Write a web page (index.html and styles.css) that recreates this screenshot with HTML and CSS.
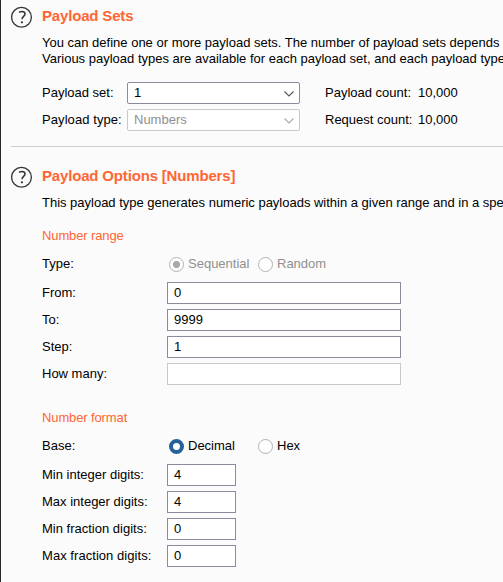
FILE: index.html
```html
<!DOCTYPE html>
<html lang="en">
<head>
<meta charset="utf-8">
<title>Payloads</title>
<link rel="stylesheet" href="styles.css">
</head>
<body>
<main class="panel">
  <section class="section sets">
    <svg class="help" viewBox="0 0 22 22"><circle cx="10.5" cy="11.2" r="9.9"/><path d="M8 6.3Q9.3 5.5 11 5.5C13 5.5 14 6.5 14 8C14 10.3 11 10.6 11 13.2"/><circle class="dot" cx="10.9" cy="16.3" r="1.1"/></svg>
    <div class="content">
      <h2>Payload Sets</h2>
      <p>You can define one or more payload sets. The number of payload sets depends<br>Various payload types are available for each payload set, and each payload type</p>
      <div class="rows set-rows">
        <div class="row"><label>Payload set:</label><div class="select">1<svg class="chevron" viewBox="0 0 10 6"><path d="M.5 .5L5 5L9.5 .5"/></svg></div><span class="name">Payload count:</span><span>10,000</span></div>
        <div class="row"><label class="wide">Payload type:</label><div class="select disabled">Numbers<svg class="chevron" viewBox="0 0 10 6"><path d="M.5 .5L5 5L9.5 .5"/></svg></div><span class="name">Request count:</span><span>10,000</span></div>
      </div>
    </div>
  </section>
  <hr>
  <section class="section options">
    <svg class="help" viewBox="0 0 22 22"><circle cx="10.5" cy="11.2" r="9.9"/><path d="M8 6.3Q9.3 5.5 11 5.5C13 5.5 14 6.5 14 8C14 10.3 11 10.6 11 13.2"/><circle class="dot" cx="10.9" cy="16.3" r="1.1"/></svg>
    <div class="content">
      <h2>Payload Options [Numbers]</h2>
      <p class="about">This payload type generates numeric payloads within a given range and in a spe</p>
      <h3>Number range</h3>
      <div class="rows">
        <div class="row radios disabled"><label>Type:</label><span class="radio checked"></span><span class="choice">Sequential</span><span class="radio"></span><span>Random</span></div>
        <div class="row"><label>From:</label><div class="field">0</div></div>
        <div class="row"><label>To:</label><div class="field">9999</div></div>
        <div class="row"><label>Step:</label><div class="field">1</div></div>
        <div class="row"><label>How many:</label><div class="field disabled"></div></div>
      </div>
      <h3 class="format">Number format</h3>
      <div class="rows">
        <div class="row radios"><label>Base:</label><span class="radio checked"></span><span class="choice">Decimal</span><span class="radio"></span><span>Hex</span></div>
        <div class="row"><label>Min integer digits:</label><div class="field small">4</div></div>
        <div class="row"><label>Max integer digits:</label><div class="field small">4</div></div>
        <div class="row"><label>Min fraction digits:</label><div class="field small">0</div></div>
        <div class="row"><label class="longest">Max fraction digits:</label><div class="field small">0</div></div>
      </div>
    </div>
  </section>
</main>
</body>
</html>
```
FILE: styles.css
```css
* { box-sizing: border-box; }
body {
  margin: 0;
  overflow: hidden;
  background: #fbfbfb;
  color: #000;
  font: 13px/16px "Liberation Sans", Arial, sans-serif;
}
.panel {
  height: 582px;
  padding-left: 10px;
  border-left: 1px solid #29282c;
  overflow: hidden;
  white-space: nowrap;
}
hr { height: 1px; margin: 0; border: 0; background: #cdcdcd; }
.section { display: flex; gap: 9px; }
.sets { height: 146px; padding-top: 6px; }
.options { padding-top: 19px; }
.help { flex: none; width: 22px; height: 22px; fill: none; stroke: #333; stroke-width: 1.3; }
.help path { stroke-width: 1.5; }
.help .dot { fill: #333; stroke: none; }
.content { flex: 1; min-width: 0; }
h2 { margin: 0; font-size: 15px; line-height: 20px; letter-spacing: -.17px; color: #ff6633; }
p { margin: 9px 0 0; }
.about { letter-spacing: -.01px; }
h3 { margin: 17px 0 9px; font-size: 13px; line-height: 16px; font-weight: normal; letter-spacing: -.12px; color: #ff6633; }
.format { margin-top: 25px; }
.rows { display: flex; flex-direction: column; gap: 5px; }
.set-rows { margin-top: 15px; }
.row { display: flex; align-items: center; height: 22px; }
.row label { width: 125px; height: 20px; line-height: 20px; }
.row .wide { letter-spacing: .08px; }
.row .longest { letter-spacing: .05px; }
.set-rows .row label { width: 85px; }
.radios { margin-bottom: 2px; }
.field, .select {
  width: 234px;
  height: 22px;
  padding-left: 6px;
  border: 1px solid #8d8a9f;
  background: #fff;
  line-height: 20px;
}
.field.small { width: 69px; }
.field.disabled { border-color: #c9c9c9; }
.select {
  display: flex;
  align-items: center;
  justify-content: space-between;
  width: 173px;
  padding-right: 5px;
  border-radius: 2px;
}
.select.disabled { border-color: #c9c9c9; color: #909090; }
.chevron { width: 10px; height: 6px; margin-top: 2px; fill: none; stroke: #555; stroke-width: 1.1; }
.disabled .chevron { stroke: #aaa; }
.name { width: 93px; margin-left: 25px; }
.radio {
  width: 15px;
  height: 15px;
  margin: 1px 4px 0 2px;
  border: 1px solid #b2b2b2;
  border-radius: 50%;
  background: #fff;
}
.radio.checked { border: 4px solid #25629b; }
.radios.disabled { color: #909090; }
.radios.disabled label { color: #000; }
.disabled .radio.checked { border: 1px solid #b2b2b2; background: radial-gradient(circle, #a9a9a9 3.2px, #fff 3.9px); }
.choice { width: 68px; }
```
